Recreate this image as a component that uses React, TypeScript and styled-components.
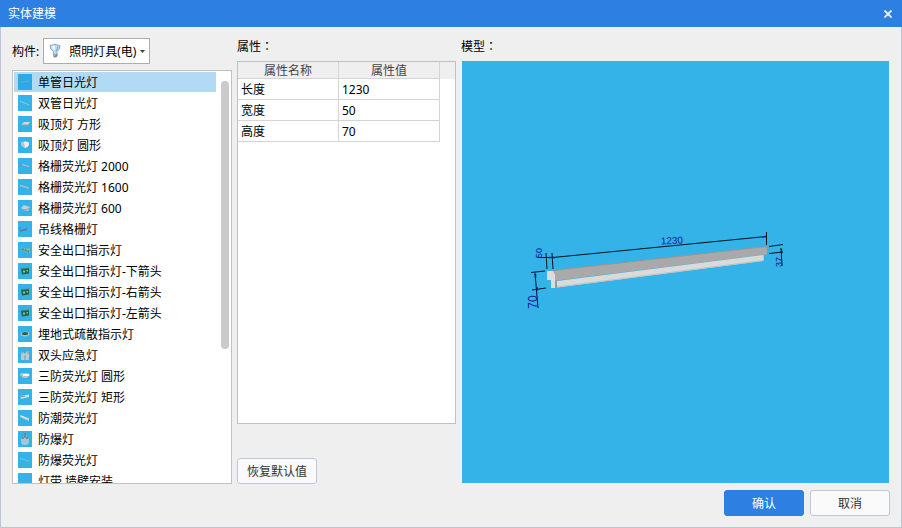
import React, { useState } from "react";
import styled, { createGlobalStyle } from "styled-components";

const GlobalStyle = createGlobalStyle`
  *, *::before, *::after { box-sizing: border-box; }
  body { margin: 0; background: #efefef; }
  body, button, select, input, table {
    font-family: "Noto Sans", "Noto Sans CJK SC", sans-serif;
    font-size: 12px;
    line-height: 18px;
    color: #000;
  }
`;

const Dialog = styled.div`
  display: flex;
  flex-direction: column;
  height: 100vh;
  background: #efefef;
`;

const TitleBar = styled.header`
  display: flex;
  flex: none;
  align-items: center;
  justify-content: space-between;
  height: 27px;
  padding: 0 8px;
  background: #2d7fe1;
`;

const Title = styled.h1`
  margin: 0;
  font-size: 12px;
  font-weight: 400;
  line-height: 18px;
  color: #fff;
`;

const CloseButton = styled.button`
  display: flex;
  align-items: center;
  justify-content: flex-end;
  width: 20px;
  height: 20px;
  padding: 0 2px 0 0;
  border: 0;
  background: transparent;
`;

const Content = styled.div`
  display: flex;
  flex: 1;
  flex-direction: column;
  gap: 6px;
  min-height: 0;
  padding: 11px;
  border: 1px solid #bcc5d6;
  border-top: 0;
`;

const Main = styled.main`
  display: grid;
  flex: 1;
  grid-template-columns: 220px 219px minmax(0, 1fr);
  column-gap: 5px;
  min-height: 0;
`;

const Column = styled.section`
  display: flex;
  flex-direction: column;
  min-width: 0;
  min-height: 0;
`;

const Caption = styled.h2`
  flex: none;
  margin: 0 0 5px;
  font-size: 12px;
  font-weight: 400;
  line-height: 18px;
`;

const Colon = styled.span`
  font-family: "Noto Sans CJK TC", sans-serif;
  line-height: 1;
`;

const PickerRow = styled.div`
  display: flex;
  flex: none;
  align-items: center;
  gap: 4px;
  margin-bottom: 6px;
`;

const PickerLabel = styled.label`
  padding-top: 2px;
`;

const Picker = styled.div`
  position: relative;
  width: 107px;
  height: 26px;
`;

const PickerSelect = styled.select`
  width: 100%;
  height: 100%;
  padding: 2px 0 0 25px;
  border: 1px solid #adadad;
  border-radius: 0;
  background: #fff;
  appearance: none;
`;

const BulbIcon = styled.svg`
  position: absolute;
  top: 5px;
  left: 5px;
  pointer-events: none;
`;

const CaretIcon = styled.svg`
  position: absolute;
  top: 12px;
  right: 5px;
  pointer-events: none;
`;

const ListBox = styled.div`
  display: flex;
  flex: 1;
  min-height: 0;
  padding: 1px 2px 0 1px;
  border: 1px solid #c1c1c1;
  background: #fff;
`;

const List = styled.ul`
  flex: 1;
  min-width: 0;
  margin: 0;
  padding: 0;
  overflow: hidden;
  list-style: none;
`;

const Item = styled.li`
  margin-bottom: 1px;
`;

const ItemButton = styled.button<{ $selected: boolean }>`
  display: flex;
  align-items: center;
  gap: 6px;
  width: 100%;
  height: 20px;
  padding: 0 4px;
  border: 0;
  background: ${(p) => (p.$selected ? "#b3daf5" : "transparent")};
  text-align: left;
  white-space: nowrap;
`;

const ItemName = styled.span`
  padding-top: 2px;
`;

const ScrollTrack = styled.div`
  flex: none;
  width: 13px;
  padding: 9px 0 0 5px;
`;

const ScrollThumb = styled.div`
  width: 8px;
  height: 268px;
  max-height: 100%;
  border-radius: 4px;
  background: #cacaca;
`;

const TableBox = styled.div`
  flex: 1;
  min-height: 0;
  margin-bottom: 34px;
  border: 1px solid #c1c1c1;
  background: #fff;
`;

const Table = styled.table`
  width: 100%;
  table-layout: fixed;
  border-collapse: separate;
  border-spacing: 0;
`;

const HeadCell = styled.th`
  width: 101px;
  height: 17px;
  padding: 2px 0 0;
  border-right: 1px solid #d4d4d4;
  border-bottom: 1px solid #d4d4d4;
  background: #efefef;
  font-weight: 400;
  line-height: 14px;
  color: #444;
`;

const FillerCell = styled.td`
  padding: 0;
  background: #efefef;
`;

const Cell = styled.td`
  height: 21px;
  padding: 2px 3px 0;
  border-right: 1px solid #d4d4d4;
  border-bottom: 1px solid #d4d4d4;
`;

const Button = styled.button<{ $primary?: boolean }>`
  flex: none;
  width: 80px;
  height: 26px;
  padding: 2px 0 0;
  border: 1px solid ${(p) => (p.$primary ? "#2d7fe1" : "#c0c8d8")};
  border-radius: 3px;
  background: ${(p) => (p.$primary ? "#2d7fe1" : "#fafafa")};
  color: ${(p) => (p.$primary ? "#fff" : "#333")};
`;

const Viewport = styled.div`
  flex: 1;
  min-height: 0;
  margin: 0 1px 1px;
  background: #33b3e7;
`;

const ModelSvg = styled.svg`
  display: block;
  width: 100%;
  height: 100%;
`;

const Footer = styled.footer`
  display: flex;
  flex: none;
  justify-content: flex-end;
  gap: 6px;
`;

type Shape =
  | "single" | "double" | "square" | "round" | "grid2000" | "grid1600" | "grid600"
  | "hanging" | "exit" | "sign" | "buried" | "twin" | "sealedRound" | "sealedBar"
  | "damp" | "explosion" | "thin" | "strip";

const shapes: Record<Shape, React.ReactNode> = {
  single: <path d="M2 8.500l4-1 5-.5" stroke="#6fabc9" />,
  double: <path d="M2 6.500l5 1.500 4 2" stroke="#a9c4cf" />,
  square: <><path d="M3 9l3-3h6l-2 3z" fill="#d2d9db" /><path d="M3 9h7" stroke="#8e9da5" /></>,
  round: <><path d="M3 5.500Q7 3 11 5.500V8Q9 11 7 11T3 8z" fill="#bfc5c8" /><path d="M6 5q3-1 5 1v2q-2 3-4 3z" fill="#eee" /></>,
  grid2000: <><path d="M2 6.500l8 3" stroke="#7f98a5" /><path d="M4 6.500l7 2" stroke="#b4c5cb" /></>,
  grid1600: <path d="M2 6.500l9 2.500" stroke="#a9bcc4" strokeWidth="1.500" />,
  grid600: <><path d="M3 8l3-3 6 2-2 4-5-1z" fill="#c5ced1" /><path d="M3 9l5 1 3-2" stroke="#8ba3ad" fill="none" /></>,
  hanging: <><path d="M2 10l7-2" stroke="#657985" strokeWidth="1.500" /><path d="M2 6v4" stroke="#438fb4" /></>,
  exit: <><path d="M3 5l4 1.500 5-.5v5l-3-1-5-1.500z" fill="#7cb7a2" /><path d="M4 7l7 2.500" stroke="#2f9871" strokeWidth="1.500" strokeDasharray="2 1" /></>,
  sign: <><path d="M3 6l8-1v5.500l-7 1z" fill="#226348" /><path d="M5 7.500h2v2H5zM8.500 7h1.500v1.500H8.500z" fill="#83c5a0" /><path d="M3 6l8-1" stroke="#55756b" /></>,
  buried: <><ellipse cx="7" cy="8" rx="4.500" ry="2.500" fill="#a9bfbd" /><ellipse cx="7" cy="7.500" rx="3" ry="1.500" fill="#286449" /></>,
  twin: <><path d="M3 5h2l2 2 2-3h2v9H3z" fill="#b8cbd3" /><path d="M4 4v3M10 3v4M7 8v5" stroke="#7e9aa8" /></>,
  sealedRound: <><path d="M3 5h7l2 2-3 3H5L2 7z" fill="#b9c1c5" /><path d="M5 7h6" stroke="#f5f5f5" strokeWidth="2" /></>,
  sealedBar: <><path d="M2 7l9-1.500v2.500l-8 2z" fill="#d7dcdf" /><path d="M2 8l5-1" stroke="#828d94" /></>,
  damp: <><path d="M2 5l3 1 6 3v2l-5-2-4-2z" fill="#c3ced3" /><path d="M3 6l8 3" stroke="#e2e5e7" /></>,
  explosion: <><path d="M6 4l1-1 2 3 2 2v4l-2 2H5l-2-2V8l3-3z" fill="#9fc7d4" /><path d="M7 2v5M5 6v2M9 6v2" stroke="#71777e" strokeWidth="1.500" /></>,
  thin: <path d="M2 6.500l4 1 5 2" stroke="#80bdd4" />,
  strip: <path d="M2 9l4-1 5-1" stroke="#59a4c3" />,
};

const fixtures: { name: string; shape: Shape }[] = [
  { name: "单管日光灯", shape: "single" },
  { name: "双管日光灯", shape: "double" },
  { name: "吸顶灯 方形", shape: "square" },
  { name: "吸顶灯 圆形", shape: "round" },
  { name: "格栅荧光灯 2000", shape: "grid2000" },
  { name: "格栅荧光灯 1600", shape: "grid1600" },
  { name: "格栅荧光灯 600", shape: "grid600" },
  { name: "吊线格栅灯", shape: "hanging" },
  { name: "安全出口指示灯", shape: "exit" },
  { name: "安全出口指示灯-下箭头", shape: "sign" },
  { name: "安全出口指示灯-右箭头", shape: "sign" },
  { name: "安全出口指示灯-左箭头", shape: "sign" },
  { name: "埋地式疏散指示灯", shape: "buried" },
  { name: "双头应急灯", shape: "twin" },
  { name: "三防荧光灯 圆形", shape: "sealedRound" },
  { name: "三防荧光灯 矩形", shape: "sealedBar" },
  { name: "防潮荧光灯", shape: "damp" },
  { name: "防爆灯", shape: "explosion" },
  { name: "防爆荧光灯", shape: "thin" },
  { name: "灯带 墙壁安装", shape: "strip" },
];

const properties = [
  { name: "长度", value: "1230" },
  { name: "宽度", value: "50" },
  { name: "高度", value: "70" },
];

function FixtureIcon({ shape, selected }: { shape: Shape; selected: boolean }) {
  return (
    <svg width="14" height="16" viewBox="0 0 14 16" fill="none" aria-hidden="true">
      <rect width="14" height="16" fill={selected ? "#2ea8ec" : "#33b3e7"} />
      {shapes[shape]}
    </svg>
  );
}

function LampModel() {
  return (
    <ModelSvg viewBox="462 61 427 422" role="img" aria-label="模型">
      <path d="M553 270.500L762 247h5v7.500L557 280.500h-3z" fill="#a9a9a9" />
      <path d="M553 270.500L762 247h5" stroke="#969696" fill="none" />
      <path d="M557 281L763 255v6L557 287.500z" fill="#dadada" />
      <path d="M557 287L763 260.500" stroke="#c2c2c2" fill="none" />
      <path d="M547 271h6l2 4v5h2l-1 8h-5v-8h-4z" fill="#dcdcdc" />
      <path d="M556 280v8" stroke="#8a8a8a" strokeWidth="1.500" />
      <path d="M763.500 255v6" stroke="#c9bcc0" />
      <g stroke="#07131c" fill="none">
        <path d="M537 257.500h16L766 236.500" />
        <path d="M546 253l1 16M552 253l1 16M766.500 232v13" />
        <path d="M531 272.500l14-1.500M532 290l14-2M535 273l3 35" />
        <path d="M769 246.500l14-2M769 253.500l14-1.500M781 248l1 18" />
      </g>
      <g stroke="#10209a" strokeWidth="1.500">
        <path d="M549 257.500h6M762 237l4-.5M535.500 274v4M537 287v4M781.500 249v3" />
      </g>
      <g fill="#10209a" fontFamily='"Liberation Sans Narrow", "Liberation Sans", sans-serif' textAnchor="middle">
        <text fontSize="10" transform="translate(672 244) rotate(-3)">1230</text>
        <text fontSize="9" transform="translate(542 253) rotate(-90)">50</text>
        <text fontSize="12" transform="translate(537 302) rotate(-90)">70</text>
        <text fontSize="9" transform="translate(782 262) rotate(-90)">37</text>
      </g>
    </ModelSvg>
  );
}

export default function App() {
  const [selected, setSelected] = useState(0);
  return (
    <>
      <GlobalStyle />
      <Dialog lang="zh-CN">
        <TitleBar>
          <Title>实体建模</Title>
          <CloseButton type="button" aria-label="关闭">
            <svg width="8" height="8" viewBox="0 0 8 8" aria-hidden="true">
              <path d="M.5.500l7 7M7.500.500l-7 7" stroke="#fff" strokeWidth="1.700" />
            </svg>
          </CloseButton>
        </TitleBar>
        <Content>
          <Main>
            <Column>
              <PickerRow>
                <PickerLabel htmlFor="component">构件:</PickerLabel>
                <Picker>
                  <PickerSelect id="component">
                    <option>照明灯具(电)</option>
                  </PickerSelect>
                  <BulbIcon width="14" height="16" viewBox="0 0 14 16" aria-hidden="true">
                    <path d="M2 2.500Q7 .5 12 2.500Q12.500 6 9 8.500V12H5.500V8.500Q1.500 6 2 2.500z" fill="#b9dbf5" stroke="#86abd0" />
                    <path d="M3.500 3Q6 2 7 3v5Q4 6 3.500 3z" fill="#eff7fe" />
                    <path d="M10 3.500Q9.500 6 8 8" stroke="#6f9fd0" fill="none" />
                    <path d="M5 11h4.500v2L8 14.500H6.500L5 13z" fill="#83888f" />
                    <path d="M5.500 12h2" stroke="#dedede" />
                  </BulbIcon>
                  <CaretIcon width="5" height="3" viewBox="0 0 5 3" aria-hidden="true">
                    <path d="M0 0h5L2.500 3z" fill="#444" />
                  </CaretIcon>
                </Picker>
              </PickerRow>
              <ListBox>
                <List>
                  {fixtures.map((f, i) => (
                    <Item key={f.name}>
                      <ItemButton
                        type="button"
                        $selected={i === selected}
                        aria-pressed={i === selected}
                        onClick={() => setSelected(i)}
                      >
                        <FixtureIcon shape={f.shape} selected={i === selected} />
                        <ItemName>{f.name}</ItemName>
                      </ItemButton>
                    </Item>
                  ))}
                </List>
                <ScrollTrack>
                  <ScrollThumb />
                </ScrollTrack>
              </ListBox>
            </Column>
            <Column>
              <Caption>属性<Colon lang="zh-TW">：</Colon></Caption>
              <TableBox>
                <Table>
                  <thead>
                    <tr>
                      <HeadCell scope="col">属性名称</HeadCell>
                      <HeadCell scope="col">属性值</HeadCell>
                      <FillerCell />
                    </tr>
                  </thead>
                  <tbody>
                    {properties.map((p) => (
                      <tr key={p.name}>
                        <Cell>{p.name}</Cell>
                        <Cell>{p.value}</Cell>
                      </tr>
                    ))}
                  </tbody>
                </Table>
              </TableBox>
              <Button type="button">恢复默认值</Button>
            </Column>
            <Column>
              <Caption>模型<Colon lang="zh-TW">：</Colon></Caption>
              <Viewport>
                <LampModel />
              </Viewport>
            </Column>
          </Main>
          <Footer>
            <Button type="button" $primary>确认</Button>
            <Button type="button">取消</Button>
          </Footer>
        </Content>
      </Dialog>
    </>
  );
}
